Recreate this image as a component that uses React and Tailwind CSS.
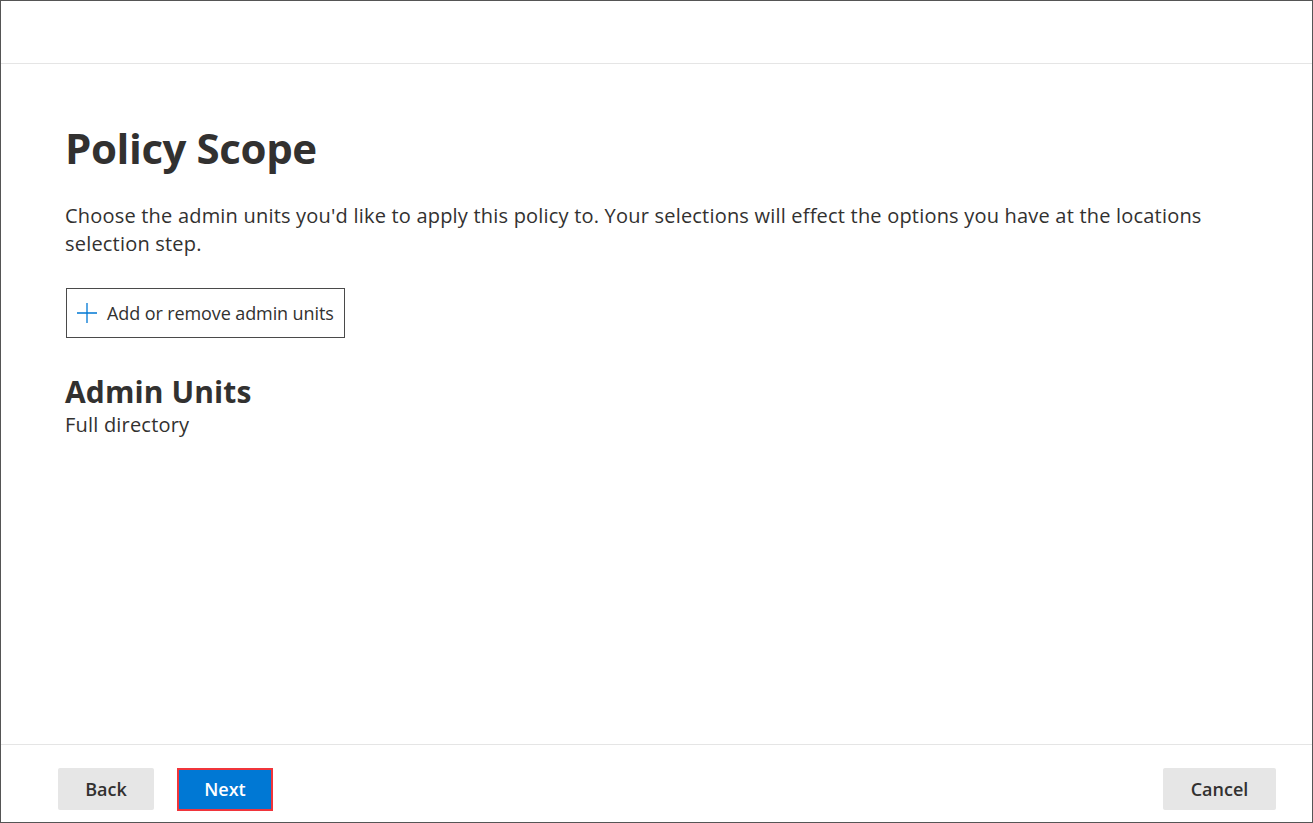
import React from 'react';

export default function App() {
  return (
    <div
      className="w-[1313px] h-[823px] border border-[#555] bg-white flex flex-col text-[#323130]"
      style={{ fontFamily: '"Open Sans", "Noto Sans", sans-serif' }}
    >
      {/* Top bar */}
      <div className="h-[63px] border-b border-[#e5e5e5] shrink-0" />

      {/* Main content */}
      <div className="flex-1 px-[64px] pt-[58px]">
        <h1 className="text-[42px] font-bold leading-[52px] tracking-[-0.4px]">Policy Scope</h1>
        <p className="mt-[28px] text-[20px] leading-[28px] tracking-[0.2px] max-w-[1150px]">
          Choose the admin units you'd like to apply this policy to. Your selections will effect the options you have at the locations selection step.
        </p>

        <button className="mt-[30px] ml-[1px] h-[50px] w-[279px] border border-[#4a4a4a] flex items-center gap-[10px] pl-[10px] text-[18px] tracking-[-0.1px]">
          <svg width="20" height="20" viewBox="0 0 20 20">
            <path d="M10 0v20M0 10h20" stroke="#0078d4" strokeWidth="1.3" />
          </svg>
          Add or remove admin units
        </button>

        <h2 className="mt-[35px] text-[30px] font-bold leading-[38px] tracking-[0.1px]">Admin Units</h2>
        <div className="text-[20px] leading-[28px] tracking-[0.2px]">Full directory</div>
      </div>

      {/* Footer */}
      <div className="h-[78px] border-t border-[#e5e5e5] shrink-0 flex items-start pt-[23px] px-[57px] justify-between">
        <div className="flex gap-[23px]">
          <button className="h-[42px] w-[96px] rounded-[2px] bg-[#e6e6e6] text-[18px] font-semibold text-[#323130]">
            Back
          </button>
          <button className="h-[43px] w-[96px] bg-[#0078d4] border-2 border-[#f0353b] text-[18px] font-semibold text-white">
            Next
          </button>
        </div>
        <button className="h-[42px] w-[113px] mr-[-21px] rounded-[2px] bg-[#e6e6e6] text-[18px] font-semibold text-[#323130]">
          Cancel
        </button>
      </div>
    </div>
  );
}
